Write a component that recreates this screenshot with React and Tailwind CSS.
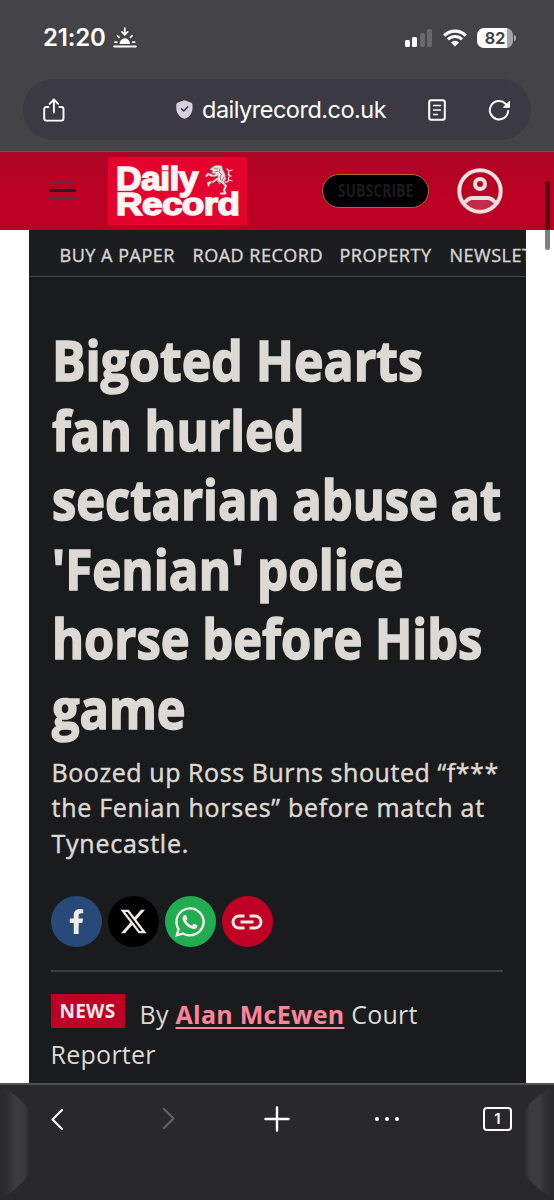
import { FaFacebookF, FaWhatsapp } from 'react-icons/fa';
import { FaXTwitter } from 'react-icons/fa6';

const navItems = [
  { label: 'BUY A PAPER', className: 'w-[133px]' },
  { label: 'ROAD RECORD', className: 'w-[147px]' },
  { label: 'PROPERTY', className: 'w-[110px]' },
  { label: 'NEWSLETTERS', className: '' }
];

const headline = [
  { text: 'Bigoted Hearts', className: 'scale-x-[0.892]' },
  { text: 'fan hurled', className: 'scale-x-[0.866]' },
  { text: 'sectarian abuse at', className: 'scale-x-[0.872]' },
  { text: "'Fenian' police", className: 'scale-x-[0.881]' },
  { text: 'horse before Hibs', className: 'scale-x-[0.872]' },
  { text: 'game', className: 'scale-x-[0.870]' }
];

const SunsetIcon = () => (
  <svg width="24" height="21" viewBox="0 0 24 21" fill="none" stroke="white" strokeWidth="1.7" strokeLinecap="round">
    <path d="M1.2 19.500h21.600" strokeWidth="2" />
    <path d="M6.600 16.900a5.200 5.600 0 0 1 10.400 0Z" fill="white" stroke="none" />
    <path d="M2 15.200h1.800M19.800 15.200h1.800M4.500 8.800l1.600 1.600M19 8.800l-1.600 1.600M11.800 1v6M8.900 4.900l2.900 2.800 2.900-2.800" />
  </svg>
);

const ShareIcon = () => (
  <svg width="22" height="24" viewBox="0 0 22 24" fill="none" stroke="white" strokeWidth="1.9" strokeLinecap="round" strokeLinejoin="round">
    <path d="M5.400 9H3.200a2 2 0 0 0-2 2v9.600a2 2 0 0 0 2 2h15.300a2 2 0 0 0 2-2V11a2 2 0 0 0-2-2h-2.200M10.900 14.500V1.800M6.600 5.800 10.900 1.500l4.300 4.300" />
  </svg>
);

const Lion = () => (
  <svg width="28" height="31" viewBox="0 0 28 31" fill="none" strokeLinecap="round" strokeLinejoin="round">
    <path d="m6 3 3-2 4-1 4 1 1 4 2 4 1 5-3 4-4 1-2-4 1-5-3-1-4-1 2-2-3-1Z" fill="#eadfdd" stroke="#8f6068" strokeWidth=".6" />
    <g stroke="#eadfdd" strokeWidth="2">
      <path d="M12 10 8 11 3 9M3 9 1.500 11M12 14l-4 3-5 1M4 18l-.500 2.500M18 18l3 3-2 4 1.500 3.500M19 28.500h-3" />
      <path d="M20 17c6 1 2-4 4-5s-2-3 0-6M24 6l-2-2M24 6l3-1M23 10l3 1M24 15l3 1" strokeWidth="1.300" />
    </g>
    <path d="m9 3 2 1 2-1M10 7l3-1M15 4l-1 3 2 2M17 9l-2 3 1 3M19 12l-2 4M14 17l3 2M19 21l-1 3M7 12l2-1M6 18l2-1" stroke="#5f575c" strokeWidth=".7" />
  </svg>
);

const StatusBar = () => (
  <div className="flex h-[75px] items-center justify-between pl-[43px] pr-[38px] text-white">
    <div className="flex items-center gap-[7px]">
      <span className="text-[24px] font-semibold leading-none tracking-[-0.200px]">21:20</span>
      <SunsetIcon />
    </div>
    <div className="flex items-center">
      <div className="mr-[11px] flex h-[18px] items-end gap-[2.500px]">
        <i className="h-[7px] w-[5px] rounded-[1.500px] bg-white" />
        <i className="h-[10px] w-[5px] rounded-[1.500px] bg-white" />
        <i className="h-[14px] w-[5px] rounded-[1.500px] bg-[#69686c]" />
        <i className="h-[18px] w-[5px] rounded-[1.500px] bg-[#69686c]" />
      </div>
      <svg width="24" height="18" viewBox="0 0 25 18" fill="none" stroke="white" strokeWidth="3.200">
        <path d="M1.300 6.500a15.800 15.800 0 0 1 22.400 0M5.200 10.400a10.300 10.300 0 0 1 14.600 0" />
        <path d="m12.500 17.800-4.200-4.200a5.900 5.900 0 0 1 8.400 0Z" fill="white" stroke="none" />
      </svg>
      <div className="ml-[10px] flex h-[20px] w-[36px] items-center justify-center rounded-[7px] bg-linear-to-r from-white from-82% to-[#a5a4a7] to-82% text-[16px] font-bold leading-none text-[#444347]">
        82
      </div>
      <i className="ml-px h-[6px] w-[2px] rounded-r-full bg-[#a5a4a7]" />
    </div>
  </div>
);

const AddressBar = () => (
  <div className="mx-[23px] mt-[4px] flex h-[61px] items-center rounded-[31px] bg-[#3b3942] px-[20px] text-white">
    <ShareIcon />
    <svg className="ml-[111px]" width="17" height="19" viewBox="0 0 17 19">
      <path d="M7.200.5a3 3 0 0 1 2.400 0l5.500 2.200q1.400.6 1.400 2v3.500c0 5-3.500 8.800-6.500 10.100q-1.500.7-3 0C3.800 17 .3 13 .3 8.200V4.700q0-1.400 1.400-2Z" fill="#d4d0e0" />
      <path d="m5.500 8.800 2.200 2.200 4-4" fill="none" stroke="#3b3942" strokeWidth="1.600" strokeLinecap="round" strokeLinejoin="round" />
    </svg>
    <span className="ml-[9px] w-[226px] text-[23.500px] leading-none tracking-[-0.500px]">dailyrecord.co.uk</span>
    <svg width="18" height="22" viewBox="0 0 18 22" fill="none" stroke="white" strokeWidth="2" strokeLinecap="round">
      <rect x="1.200" y="1.200" width="15.600" height="19.600" rx="2" />
      <path d="M5.700 6.500h6.600M5.700 11h6.600M5.700 15.500h3.500" strokeWidth="1.700" />
    </svg>
    <svg className="ml-auto" width="23" height="22" viewBox="0 0 23 22" fill="none" stroke="white" strokeWidth="2" strokeLinecap="round">
      <path d="M20.200 12a9.200 9.200 0 1 1-2.700-7.300l2.200 2.400" />
      <path d="M21.500 2.600v5.700h-5.700Z" fill="white" strokeWidth="1" strokeLinejoin="round" />
    </svg>
  </div>
);

const SiteHeader = () => (
  <header className="flex h-[79px] shrink-0 items-center border-t border-[#77525f] bg-linear-to-b from-[#ad0525] to-[#bc0023] to-60%">
    <div className="mb-px ml-[49px] flex w-[27px] flex-col gap-[5px]">
      <i className="h-[3px] bg-[#573039]" />
      <i className="h-[3px] bg-[#241c1f]" />
      <i className="h-[3px] bg-[#573039]" />
    </div>
    <div className="relative mb-px ml-[32px] h-[68px] w-[139px] bg-[#e4032e] pl-[8px] pt-[8px] font-['Liberation_Sans'] font-bold leading-[26px] text-[#fff5f4] [-webkit-text-stroke:1.600px_#fff5f4]">
      <span className="block w-max origin-left scale-x-[1.040] text-[34px] tracking-[-0.500px]">Daily</span>
      <span className="block w-max origin-left scale-x-[1.150] text-[32px] tracking-[-0.500px]">Record</span>
      <div className="absolute left-[97px] top-[8px]"><Lion /></div>
    </div>
    <button className="mb-px ml-[75px] flex h-[34px] w-[107px] items-center justify-center rounded-full border border-[#a86b3a] bg-black pb-px font-['Open_Sans'] text-[18px] font-bold text-[#191b1c]">
      <span className="scale-x-[0.780]">SUBSCRIBE</span>
    </button>
    <svg className="mb-px ml-[28px]" width="46" height="46" viewBox="0 0 46 46" fill="none" stroke="#ece0de" strokeWidth="4">
      <ellipse cx="23" cy="36.500" rx="13" ry="5" fill="#c32b4b" stroke="none" />
      <circle cx="23" cy="23" r="20.700" />
      <circle cx="23" cy="16" r="5" />
      <path d="M8 34.500q3-4.500 8-4.500h14q5 0 8 4.500" />
    </svg>
  </header>
);

const Article = () => (
  <main className="mx-auto h-[853px] w-[497px] shrink-0 overflow-hidden bg-[#1a1b1c] font-['Open_Sans'] text-[#dddad5]">
    <nav className="flex h-[47px] items-center overflow-hidden whitespace-nowrap border-b border-[#434548] bg-[#1b1d1e] pl-[31px] pt-[4px] text-[18px] tracking-[0.520px] [-webkit-text-stroke:0.400px_#cfccc8]">
      {navItems.map((item) => (
        <span key={item.label} className={`shrink-0 ${item.className}`}>{item.label}</span>
      ))}
    </nav>
    <div className="pl-[22px] pr-[23px] pt-[48px]">
      <h1 className="ml-px whitespace-nowrap text-[56px] font-bold leading-[69.600px] [-webkit-text-stroke:1.600px_#dddad5]">
        {headline.map((line) => (
          <span key={line.text} className={`block w-max origin-left ${line.className}`}>{line.text}</span>
        ))}
      </h1>
      <p className="ml-px mt-[12px] whitespace-nowrap text-[25px] leading-[35.500px] [-webkit-text-stroke:0.450px_#dddad5]">
        <span className="block tracking-[0.570px]">Boozed up Ross Burns shouted “f***</span>
        <span className="block tracking-[0.720px]">the Fenian horses” before match at</span>
        <span className="block tracking-[0.750px]">Tynecastle.</span>
      </p>
      <div className="mt-[35px] flex gap-[6px] border-b-2 border-[#3b3c3f] pb-[23px] text-[#efeae5]">
        <a className="flex size-[51px] items-center justify-center rounded-full bg-[#274a79]"><FaFacebookF size={25} /></a>
        <a className="flex size-[51px] items-center justify-center rounded-full bg-black"><FaXTwitter size={29} /></a>
        <a className="flex size-[51px] items-center justify-center rounded-full bg-[#20ac51]">
          <FaWhatsapp size={34} />
        </a>
        <a className="flex size-[51px] items-center justify-center rounded-full bg-[#bf0024]">
          <svg width="32" height="16" viewBox="0 0 32 16" fill="none" stroke="currentColor" strokeWidth="3">
            <path d="M13.500 2H8a6 6 0 0 0 0 12h5.500M18.500 2H24a6 6 0 0 1 0 12h-5.500M9.500 8h13" />
          </svg>
        </a>
      </div>
      <div className="mt-[22px] whitespace-nowrap text-[25px] leading-[40px] tracking-[0.270px]">
        <div className="flex">
          <span className="mr-[15px] flex h-[34px] w-[74px] items-center justify-center bg-[#bd0024] text-[19px] font-bold text-[#f6e9e7]">NEWS</span>
          <span>By <a className="font-bold text-[#ff849b] underline decoration-2 underline-offset-[3px] [text-decoration-skip-ink:none]">Alan McEwen</a> Court</span>
        </div>
        <div>Reporter</div>
      </div>
    </div>
  </main>
);

const BottomBar = () => (
  <footer className="flex h-[117px] shrink-0 border-t-2 border-[#505055] bg-[#29282d]">
    <svg width="30" height="115" viewBox="0 0 30 115">
      <defs>
        <linearGradient id="edge">
          <stop offset="0" stopColor="#29282d" />
          <stop offset=".3" stopColor="#303034" />
          <stop offset=".5" stopColor="#3d3c41" />
          <stop offset=".8" stopColor="#3b3a3f" />
          <stop offset="1" stopColor="#29282d" />
        </linearGradient>
      </defs>
      <path d="M0 0q26 16 30 28v58q-4 12-30 29Z" fill="url(#edge)" />
    </svg>
    <div className="flex flex-1 items-start justify-between pl-[21px] pr-[12px] pt-[20px]">
      <svg width="12" height="30" viewBox="0 0 12 30" fill="none" stroke="white" strokeWidth="2.200" strokeLinecap="round" strokeLinejoin="round"><path d="M11 5 1.500 14.500 11 24" /></svg>
      <svg className="ml-[83px]" width="12" height="30" viewBox="0 0 12 30" fill="none" stroke="#626167" strokeWidth="2.200" strokeLinecap="round" strokeLinejoin="round"><path d="m1 4 9.500 9.500L1 23" /></svg>
      <svg className="ml-[72px] mt-[1px]" width="26" height="26" viewBox="0 0 26 26" stroke="white" strokeWidth="2.400" strokeLinecap="round"><path d="M13 1.500v23M1.500 13h23" /></svg>
      <div className="ml-[68px] mt-[12px] flex gap-[6px]">
        {[0, 1, 2].map((dot) => <i key={dot} className="size-[4px] rounded-full bg-white" />)}
      </div>
      <span className="ml-[67px] mt-[2px] flex h-[24px] w-[29px] items-center justify-center rounded-[4px] border-2 border-white text-[15px] font-semibold text-white">1</span>
    </div>
    <svg className="-scale-x-100" width="30" height="115" viewBox="0 0 30 115">
      <path d="M0 0q26 16 30 28v58q-4 12-30 29Z" fill="url(#edge)" />
    </svg>
  </footer>
);

export default function App() {
  return (
    <div className="relative flex h-[1200px] w-[554px] flex-col overflow-hidden bg-white font-['Inter']">
      <div className="h-[151px] shrink-0 bg-[#444347]">
        <StatusBar />
        <AddressBar />
      </div>
      <SiteHeader />
      <Article />
      <BottomBar />
      <i className="absolute left-[545px] top-[181px] h-[69px] w-[5px] rounded-full bg-black/50" />
    </div>
  );
}
